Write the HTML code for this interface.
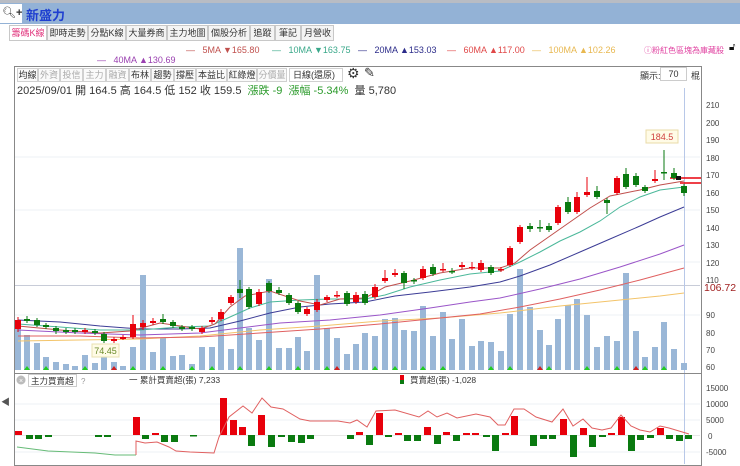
<!DOCTYPE html>
<html><head><meta charset="utf-8"><style>
*{margin:0;padding:0;box-sizing:border-box}
body{width:740px;height:464px;overflow:hidden;background:#fff;font-family:"Liberation Sans","Noto Sans CJK TC",sans-serif;position:relative;color:#333}
.a{position:absolute;white-space:nowrap}
.tab{position:absolute;top:25px;height:16px;border:1px solid #c8c8c8;background:#f4f4f4;font-size:9px;line-height:14px;text-align:center;color:#333;white-space:nowrap;overflow:hidden}
.tb{position:absolute;top:68px;height:14px;border:1px solid #d0d0d0;background:#fafafa;font-size:9px;line-height:12px;text-align:center;color:#333;white-space:nowrap;overflow:hidden}
.tb.g{color:#aaa}
</style></head><body>
<div class="a" style="left:0;top:0;width:740px;height:3px;background:#b8bcc4"></div>
<div class="a" style="left:0;top:3px;width:740px;height:21px;background:#93b2d6"></div>
<div class="a" style="left:0;top:4px;width:22px;height:19px;background:#fff;font-size:11px;line-height:19px;padding-left:2px;color:#333">🔍︎<b>+</b></div>
<div class="a" style="left:26px;top:5px;font-size:13px;font-weight:bold;color:#1f3fd0">新盛力</div>

<div class="tab" style="left:9px;width:38px;background:#fff;color:#e0307a">籌碼K線</div>
<div class="tab" style="left:47px;width:41px">即時走勢</div>
<div class="tab" style="left:88px;width:38px">分點K線</div>
<div class="tab" style="left:126px;width:41px">大量券商</div>
<div class="tab" style="left:167px;width:41px">主力地圖</div>
<div class="tab" style="left:208px;width:42px">個股分析</div>
<div class="tab" style="left:250px;width:25px">追蹤</div>
<div class="tab" style="left:275px;width:26px">筆記</div>
<div class="tab" style="left:301px;width:33px">月營收</div>

<div class="a" style="left:186px;top:45px;font-size:9px;color:#c0504d">—&nbsp;&nbsp;&nbsp;5MA ▼165.80</div>
<div class="a" style="left:272px;top:45px;font-size:9px;color:#3aa88a">—&nbsp;&nbsp;&nbsp;10MA ▼163.75</div>
<div class="a" style="left:358px;top:45px;font-size:9px;color:#2c2c8a">—&nbsp;&nbsp;&nbsp;20MA ▲153.03</div>
<div class="a" style="left:447px;top:45px;font-size:9px;color:#e04848">—&nbsp;&nbsp;&nbsp;60MA ▲117.00</div>
<div class="a" style="left:532px;top:45px;font-size:9px;color:#e8b850">—&nbsp;&nbsp;&nbsp;100MA ▲102.26</div>
<div class="a" style="left:644px;top:45px;font-size:8px;color:#e040a0">ⓘ粉紅色區塊為庫藏股</div>
<div class="a" style="left:729px;top:42px;font-size:10px;color:#111">🔓︎</div>
<div class="a" style="left:97px;top:55px;font-size:9px;color:#9a40b0">—&nbsp;&nbsp;&nbsp;40MA ▲130.69</div>

<div class="a" style="left:14px;top:66px;width:688px;height:400px;border:1px solid #888"></div>
<div class="tb" style="left:17px;width:21px">均線</div>
<div class="tb g" style="left:38px;width:22px">外資</div>
<div class="tb g" style="left:60px;width:23px">投信</div>
<div class="tb g" style="left:83px;width:23px">主力</div>
<div class="tb g" style="left:106px;width:23px">融資</div>
<div class="tb" style="left:129px;width:22px">布林</div>
<div class="tb" style="left:151px;width:23px">趨勢</div>
<div class="tb" style="left:174px;width:22px">撐壓</div>
<div class="tb" style="left:196px;width:31px">本益比</div>
<div class="tb" style="left:227px;width:30px">紅綠燈</div>
<div class="tb g" style="left:257px;width:30px">分價量</div>
<div class="tb" style="left:289px;width:54px;background:#fff;text-align:left;padding-left:3px">日線(還原) <span style="color:#888;font-size:7px;margin-left:6px">▾</span></div>
<div class="a" style="left:347px;top:65px;font-size:14px;color:#333">⚙</div>
<div class="a" style="left:364px;top:65px;font-size:13px;color:#333">✎</div>
<div class="a" style="left:640px;top:69px;font-size:9px">顯示:</div>
<div class="a" style="left:660px;top:67px;width:27px;height:14px;border:1px solid #ccc;font-size:9px;line-height:12px;text-align:center">70</div>
<div class="a" style="left:691px;top:69px;font-size:9px">棍</div>
<div class="a" style="left:17px;top:82px;font-size:11px;color:#333">2025/09/01 開 164.5 高 164.5 低 152 收 159.5 <span style="color:#2a9a2a">&nbsp;漲跌 -9 &nbsp;漲幅 -5.34%</span> &nbsp;量 5,780</div>

<div class="a" style="left:1px;top:395px;font-size:9px;color:#555">◀</div>

<svg class="a" style="left:0;top:0" width="740" height="464" xmlns="http://www.w3.org/2000/svg">
<g stroke="#eef0f4" stroke-width="1">
<line x1="15" y1="157" x2="700" y2="157"/><line x1="15" y1="210" x2="700" y2="210"/><line x1="15" y1="262" x2="700" y2="262"/><line x1="15" y1="315" x2="700" y2="315"/>
<line x1="15" y1="404" x2="700" y2="404"/><line x1="15" y1="420" x2="700" y2="420"/><line x1="15" y1="452" x2="700" y2="452"/>
</g>
<line x1="15" y1="285.5" x2="700" y2="285.5" stroke="#c8ccd8"/>
<line x1="684.5" y1="88" x2="684.5" y2="464" stroke="#b8c8e8"/>
<line x1="15" y1="373.5" x2="701" y2="373.5" stroke="#888"/>
<line x1="15" y1="435.5" x2="700" y2="435.5" stroke="#e8e8e8"/>
<g fill="#9ab7d7">
<rect x="15" y="323" width="6" height="47"/><rect x="24" y="335" width="6" height="35"/><rect x="34" y="343" width="6" height="27"/><rect x="43" y="357" width="6" height="13"/><rect x="53" y="362" width="6" height="8"/><rect x="63" y="364" width="6" height="6"/><rect x="72" y="366" width="6" height="4"/><rect x="82" y="355" width="6" height="15"/><rect x="92" y="363" width="6" height="7"/><rect x="101" y="353" width="6" height="17"/><rect x="111" y="362" width="6" height="8"/><rect x="120" y="366" width="6" height="4"/><rect x="130" y="347" width="6" height="23"/><rect x="140" y="275" width="6" height="95"/><rect x="150" y="352" width="6" height="18"/><rect x="160" y="338" width="6" height="32"/><rect x="170" y="356" width="6" height="14"/><rect x="179" y="355" width="6" height="15"/><rect x="189" y="364" width="6" height="6"/><rect x="199" y="347" width="6" height="23"/><rect x="209" y="347" width="6" height="23"/><rect x="218" y="318" width="6" height="52"/><rect x="228" y="349" width="6" height="21"/><rect x="237" y="248" width="6" height="122"/><rect x="246" y="328" width="6" height="42"/><rect x="256" y="340" width="6" height="30"/><rect x="266" y="279" width="6" height="91"/><rect x="276" y="348" width="6" height="22"/><rect x="286" y="348" width="6" height="22"/><rect x="295" y="337" width="6" height="33"/><rect x="304" y="351" width="6" height="19"/><rect x="314" y="275" width="6" height="95"/><rect x="324" y="328" width="6" height="42"/><rect x="334" y="338" width="6" height="32"/><rect x="344" y="354" width="6" height="16"/><rect x="353" y="344" width="6" height="26"/><rect x="362" y="333" width="6" height="37"/>
<rect x="372" y="336" width="6" height="34"/><rect x="382" y="319" width="6" height="51"/><rect x="392" y="318" width="6" height="52"/><rect x="401" y="330" width="6" height="40"/><rect x="411" y="331" width="6" height="39"/><rect x="420" y="306" width="6" height="64"/><rect x="430" y="336" width="6" height="34"/><rect x="440" y="312" width="6" height="58"/><rect x="449" y="339" width="6" height="31"/><rect x="459" y="319" width="6" height="51"/><rect x="469" y="346" width="6" height="24"/><rect x="478" y="341" width="6" height="29"/><rect x="488" y="342" width="6" height="28"/><rect x="498" y="351" width="6" height="19"/><rect x="507" y="314" width="6" height="56"/><rect x="517" y="269" width="6" height="101"/><rect x="527" y="307" width="6" height="63"/><rect x="537" y="330" width="6" height="40"/><rect x="546" y="345" width="6" height="25"/><rect x="555" y="319" width="6" height="51"/><rect x="565" y="305" width="6" height="65"/><rect x="574" y="299" width="6" height="71"/><rect x="584" y="315" width="6" height="55"/><rect x="594" y="347" width="6" height="23"/><rect x="604" y="336" width="6" height="34"/><rect x="614" y="341" width="6" height="29"/><rect x="623" y="273" width="6" height="97"/><rect x="633" y="331" width="6" height="39"/><rect x="642" y="357" width="6" height="13"/><rect x="652" y="347" width="6" height="23"/><rect x="661" y="322" width="6" height="48"/><rect x="671" y="349" width="6" height="21"/><rect x="681" y="363" width="6" height="7"/>
</g>
<g fill="#22cc22"><path d="M24 370l3-4 3 4zM43 370l3-4 3 4zM82 370l3-4 3 4zM130 370l3-4 3 4zM160 370l3-4 3 4zM189 370l3-4 3 4zM209 370l3-4 3 4zM237 370l3-4 3 4zM266 370l3-4 3 4zM295 370l3-4 3 4zM324 370l3-4 3 4zM372 370l3-4 3 4zM392 370l3-4 3 4zM420 370l3-4 3 4zM440 370l3-4 3 4zM488 370l3-4 3 4zM507 370l3-4 3 4zM546 370l3-4 3 4zM584 370l3-4 3 4zM614 370l3-4 3 4zM642 370l3-4 3 4zM661 370l3-4 3 4z"/></g>
<g fill="#d02020"><path d="M111 370l3-4 3 4zM334 370l3-4 3 4zM537 370l3-4 3 4zM633 370l3-4 3 4z"/></g>
<g fill="none" stroke-width="1">
<polyline stroke="#f3c46a" points="18,341 80,340 140,339 200,336 260,330 320,326 380,321 440,318 500,313 560,306 620,300 660,296 684,293"/>
<polyline stroke="#e06060" points="18,336 80,336 140,338 200,337 260,333 320,329 380,324 440,318 480,314 520,307 560,299 600,290 640,280 684,268"/>
<polyline stroke="#9a55c8" points="18,330 80,333 140,335 200,333 240,328 280,323 330,320 380,315 430,308 470,302 500,298 540,289 580,279 620,267 660,254 684,245"/>
<polyline stroke="#3c3c96" points="18,320 60,322 100,326 140,329 180,329 210,328 240,321 270,313 300,307 330,304 365,302 395,296 430,292 470,287 500,282 520,276 550,265 580,252 610,239 640,226 660,217 684,207"/>
<polyline stroke="#4bb89a" points="18,324 60,327 100,330 140,330 180,327 210,326 230,317 250,308 270,302 300,300 330,299 365,299 385,295 410,287 440,280 470,274 500,271 520,262 540,252 560,241 580,232 600,221 620,207 640,197 660,190 684,187"/>
<polyline stroke="#c0504d" points="18,326 60,330 100,333 130,331 160,323 200,329 215,324 230,307 245,296 270,291 300,301 320,305 340,299 365,298 385,287 410,281 440,273 470,268 500,268 515,263 530,250 550,236 570,222 590,208 610,196 625,193 640,190 660,185 684,181"/>
</g>
<g stroke="#e8000b" stroke-width="1.6"><line x1="670" y1="178" x2="701" y2="178"/><line x1="680" y1="183" x2="701" y2="183"/></g>
<g>
<g stroke="#e8000b" fill="#e8000b">
<path d="M18 317V332M85 328V334M114 337V343M123 335V340M133 315V339M143 320V330M153 318V325M202 326V334M212 317V324M221 309V321M231 295V305M259 289V306M307 307V316M317 299V312M327 295V302M337 291V298M356 292V304M375 284V299M385 270V283M395 269V277M423 266V280M443 263V272M462 262V269M472 262V270M481 260V272M501 267V272M510 246V267M520 225V244M558 205V225M577 192V214M587 177V197M617 176V195M655 170V183"/>
</g>
<g stroke="#0a7a10"><path d="M27 316V323M37 318V327M46 323V329M56 326V334M66 328V334M75 328V334M95 329V335M104 332V343M163 314V324M173 320V328M182 325V331M192 325V331M240 280V298M249 287V309M269 281V293M279 287V295M289 293V305M298 301V314M347 291V306M365 291V305M404 271V289M414 278V284M433 264V276M452 268V274M491 265V275M530 223V232M540 220V232M549 223V232M568 197V214M597 186V199M607 198V214M626 168V189M636 173V187M645 185V193M664 150V180M674 168V180M684 184V196"/></g>
<g fill="#e8000b">
<rect x="15" y="320" width="6" height="9"/><rect x="82" y="330" width="6" height="2"/><rect x="111" y="339" width="6" height="2"/><rect x="120" y="337" width="6" height="2"/><rect x="130" y="324" width="6" height="13"/><rect x="140" y="323" width="6" height="4"/><rect x="150" y="321" width="6" height="2"/><rect x="199" y="328" width="6" height="4"/><rect x="209" y="320" width="6" height="2"/><rect x="218" y="312" width="6" height="7"/><rect x="228" y="297" width="6" height="6"/><rect x="256" y="292" width="6" height="12"/><rect x="304" y="309" width="6" height="5"/><rect x="314" y="302" width="6" height="8"/><rect x="324" y="297" width="6" height="3"/><rect x="334" y="295" width="6" height="1.5"/><rect x="353" y="295" width="6" height="7"/><rect x="372" y="287" width="6" height="10"/><rect x="382" y="278" width="6" height="3"/><rect x="392" y="273" width="6" height="2"/><rect x="420" y="269" width="6" height="9"/><rect x="440" y="269" width="6" height="1.5"/><rect x="459" y="265" width="6" height="2"/><rect x="469" y="267" width="6" height="1.5"/><rect x="478" y="263" width="6" height="7"/><rect x="498" y="269" width="6" height="1.5"/><rect x="507" y="248" width="6" height="17"/><rect x="517" y="227" width="6" height="15"/><rect x="555" y="207" width="6" height="16"/><rect x="574" y="197" width="6" height="15"/><rect x="584" y="192" width="6" height="3"/><rect x="614" y="178" width="6" height="15"/><rect x="652" y="179" width="6" height="2"/>
</g>
<g fill="#0a7a10">
<rect x="24" y="319" width="6" height="2"/><rect x="34" y="320" width="6" height="5"/><rect x="43" y="325" width="6" height="2"/><rect x="53" y="328" width="6" height="3"/><rect x="63" y="330" width="6" height="2"/><rect x="72" y="330" width="6" height="2"/><rect x="92" y="331" width="6" height="2"/><rect x="101" y="334" width="6" height="7"/><rect x="160" y="319" width="6" height="3"/><rect x="170" y="322" width="6" height="4"/><rect x="179" y="327" width="6" height="2"/><rect x="189" y="327" width="6" height="2"/><rect x="237" y="289" width="6" height="4"/><rect x="246" y="289" width="6" height="18"/><rect x="266" y="283" width="6" height="8"/><rect x="276" y="290" width="6" height="3"/><rect x="286" y="295" width="6" height="8"/><rect x="295" y="303" width="6" height="9"/><rect x="344" y="293" width="6" height="11"/><rect x="362" y="294" width="6" height="9"/><rect x="401" y="273" width="6" height="10"/><rect x="411" y="280" width="6" height="1.5"/><rect x="430" y="267" width="6" height="7"/><rect x="449" y="271" width="6" height="1.5"/><rect x="488" y="267" width="6" height="6"/><rect x="527" y="226" width="6" height="3"/><rect x="537" y="227" width="6" height="1.5"/><rect x="546" y="226" width="6" height="4"/><rect x="565" y="202" width="6" height="10"/><rect x="594" y="191" width="6" height="6"/><rect x="604" y="200" width="6" height="3"/><rect x="623" y="174" width="6" height="13"/><rect x="633" y="176" width="6" height="9"/><rect x="642" y="187" width="6" height="4"/><rect x="661" y="172" width="6" height="1.5"/><rect x="671" y="173" width="6" height="5"/><rect x="681" y="186" width="6" height="7"/>
</g>
<rect x="676" y="176" width="5" height="4" fill="#111"/>
</g>
<rect x="92" y="344" width="27" height="13" fill="#fffbe6" stroke="#e8e0b0"/>
<text x="105.5" y="354" font-size="9" text-anchor="middle" fill="#6a8a2a" font-family="Liberation Sans">74.45</text>
<rect x="646" y="130" width="32" height="13" fill="#fffbe6" stroke="#eadba8"/>
<text x="662" y="140" font-size="9" text-anchor="middle" fill="#d04040" font-family="Liberation Sans">184.5</text>
<g font-size="8" fill="#444" font-family="Liberation Sans">
<text x="706" y="108">210</text><text x="706" y="126">200</text><text x="706" y="143">190</text><text x="706" y="161">180</text><text x="706" y="178">170</text><text x="706" y="196">160</text><text x="706" y="213">150</text><text x="706" y="231">140</text><text x="706" y="248">130</text><text x="706" y="266">120</text><text x="706" y="283">110</text><text x="706" y="318">90</text><text x="706" y="336">80</text><text x="706" y="353">70</text><text x="706" y="370">60</text>
<text x="706" y="391">15000</text><text x="706" y="407">10000</text><text x="706" y="423">5000</text><text x="708" y="439">0</text><text x="706" y="455">-5000</text>
</g>
<text x="704" y="291" font-size="10.5" fill="#a02020" font-family="Liberation Sans">106.72</text>
<g fill="#e8000b">
<rect x="15" y="431" width="7" height="4"/><rect x="133" y="417" width="7" height="18"/><rect x="152" y="433" width="7" height="2"/><rect x="220" y="398" width="7" height="37"/><rect x="230" y="420" width="7" height="15"/><rect x="239" y="427" width="7" height="8"/><rect x="258" y="415" width="7" height="20"/><rect x="356" y="432" width="7" height="3"/><rect x="376" y="413" width="7" height="22"/><rect x="395" y="433" width="7" height="2"/><rect x="424" y="427" width="7" height="8"/><rect x="443" y="432" width="7" height="3"/><rect x="463" y="433" width="7" height="2"/><rect x="472" y="433" width="7" height="2"/><rect x="502" y="433" width="7" height="2"/><rect x="511" y="416" width="7" height="19"/><rect x="560" y="419" width="7" height="16"/><rect x="580" y="428" width="7" height="7"/><rect x="608" y="433" width="7" height="2"/><rect x="618" y="417" width="7" height="18"/><rect x="657" y="428" width="7" height="7"/>
</g>
<g fill="#0a7a10">
<rect x="26" y="435" width="7" height="4"/><rect x="35" y="435" width="7" height="4"/><rect x="45" y="435" width="7" height="2"/><rect x="95" y="435" width="7" height="2"/><rect x="104" y="435" width="7" height="2"/><rect x="142" y="435" width="7" height="4"/><rect x="161" y="435" width="7" height="7"/><rect x="171" y="435" width="7" height="7"/><rect x="190" y="435" width="7" height="1.5"/><rect x="248" y="435" width="7" height="11"/><rect x="268" y="435" width="7" height="12"/><rect x="278" y="435" width="7" height="2"/><rect x="288" y="435" width="7" height="7"/><rect x="298" y="435" width="7" height="8"/><rect x="307" y="435" width="7" height="4"/><rect x="347" y="435" width="7" height="4"/><rect x="366" y="435" width="7" height="10"/><rect x="385" y="435" width="7" height="2"/><rect x="404" y="435" width="7" height="6"/><rect x="414" y="435" width="7" height="6"/><rect x="434" y="435" width="7" height="9"/><rect x="453" y="435" width="7" height="6"/><rect x="483" y="435" width="7" height="2"/><rect x="492" y="435" width="7" height="16"/><rect x="530" y="435" width="7" height="11"/><rect x="540" y="435" width="7" height="4"/><rect x="549" y="435" width="7" height="4"/><rect x="570" y="435" width="7" height="22"/><rect x="589" y="435" width="7" height="12"/><rect x="599" y="435" width="7" height="2"/><rect x="628" y="435" width="7" height="16"/><rect x="637" y="435" width="7" height="5"/><rect x="647" y="435" width="7" height="3"/><rect x="666" y="435" width="7" height="4"/><rect x="676" y="435" width="7" height="6"/><rect x="685" y="435" width="7" height="4"/>
</g>
<polyline fill="none" stroke="#66bb77" points="17,447 48,451 95,453 115,455 128,455 136,455"/>
<polyline fill="none" stroke="#e06060" points="136,455 136,441 145,443 157,442 169,447 176,451 190,452 214,453 219,437 229,417 243,406 252,413 262,398 271,407 283,409 300,419 310,421 338,421 350,423 357,420 367,427 376,411 395,410 419,417 428,411 437,417 447,413 457,418 476,414 490,417 498,425 505,425 514,409 524,409 536,417 552,422 563,409 573,426 583,419 592,428 602,430 611,428 621,415 631,426 640,430 650,432 660,426 669,428 689,434"/>
<circle cx="21" cy="380" r="4.5" fill="#bbb"/><text x="21" y="383" font-size="7" fill="#fff" text-anchor="middle" font-family="Liberation Sans">×</text>
<rect x="28.5" y="374.5" width="48" height="12" fill="#fff" stroke="#ccc"/>
<text x="31" y="384" font-size="8.5" fill="#333" font-family="Liberation Sans, Noto Sans CJK TC">主力買賣超</text>
<text x="71" y="384" font-size="6" fill="#888">▾</text>
<text x="81" y="384" font-size="8" fill="#999">?</text>
<text x="129" y="383" font-size="8.5" fill="#333" font-family="Liberation Sans, Noto Sans CJK TC">一 累計買賣超(張) 7,233</text>
<rect x="400" y="375" width="4" height="5" fill="#e8000b"/><rect x="400" y="380" width="4" height="4" fill="#0a7a10"/>
<text x="410" y="383" font-size="8.5" fill="#333" font-family="Liberation Sans, Noto Sans CJK TC">買賣超(張) -1,028</text>
</svg>
</body></html>
